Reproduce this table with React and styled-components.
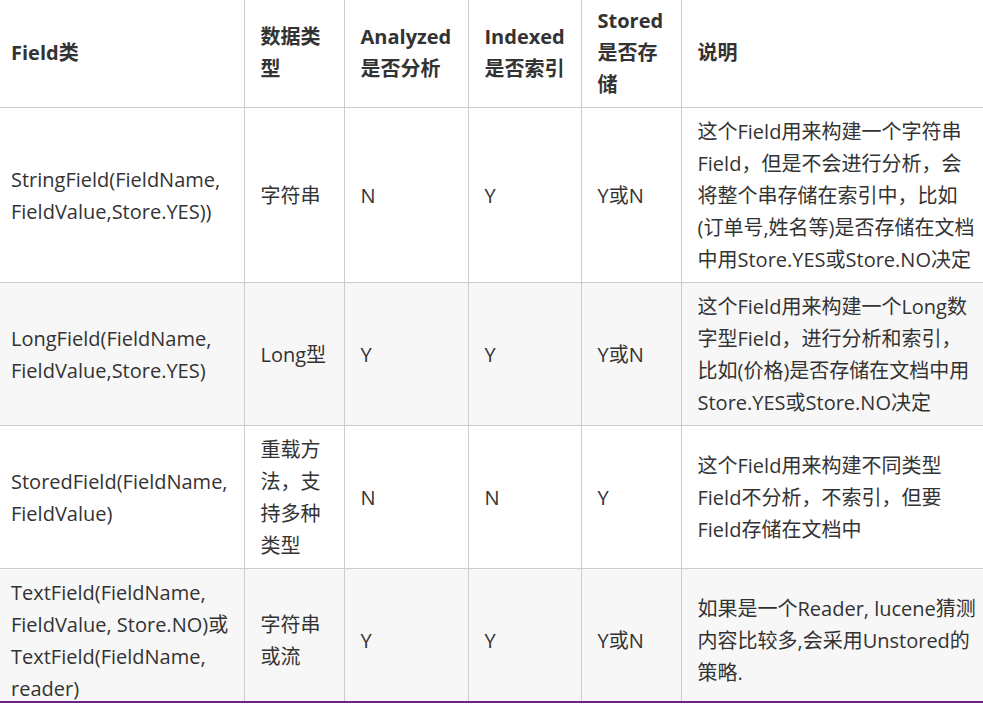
import styled, { createGlobalStyle } from "styled-components";

const GlobalStyle = createGlobalStyle`
  html, body {
    margin: 0;
    padding: 0;
    background: #fff;
  }
  body {
    font-family: "Open Sans", "Noto Sans CJK SC", sans-serif;
    color: #333;
  }
`;

const Frame = styled.div`
  width: 983px;
  height: 701px;
  overflow: hidden;
  border-bottom: 2px solid #6c2386;
`;

const Table = styled.table`
  border-collapse: collapse;
  table-layout: fixed;
  width: 995px;
  font-size: 20px;
  line-height: 32px;
`;

const HeadCell = styled.th`
  text-align: left;
  vertical-align: middle;
  font-weight: 700;
  padding: 5px 16px 6px;
  border-left: 1px solid #ccc;
  border-bottom: 1px solid #ccc;

  &:first-child {
    border-left: none;
    padding-left: 11px;
    padding-right: 10px;
  }
`;

const Row = styled.tr`
  background: ${(p) => (p.$striped ? "#f7f7f7" : "#fff")};
`;

const Cell = styled.td`
  vertical-align: middle;
  padding: 8px 16px 6px;
  border-left: 1px solid #ccc;
  border-bottom: 1px solid #ccc;

  &:first-child {
    border-left: none;
    padding-left: 11px;
    padding-right: 10px;
  }
`;

const columns = [
  { label: "Field类", width: 244 },
  { label: "数据类型", width: 100 },
  { label: "Analyzed 是否分析", width: 124 },
  { label: "Indexed 是否索引", width: 113 },
  { label: "Stored 是否存储", width: 100 },
  { label: "说明", width: 314 },
];

const rows = [
  [
    "StringField(FieldName, FieldValue,Store.YES))",
    "字符串",
    "N",
    "Y",
    "Y或N",
    "这个Field用来构建一个字符串Field，但是不会进行分析，会将整个串存储在索引中，比如(订单号,姓名等)是否存储在文档中用Store.YES或Store.NO决定",
  ],
  [
    "LongField(FieldName, FieldValue,Store.YES)",
    "Long型",
    "Y",
    "Y",
    "Y或N",
    "这个Field用来构建一个Long数字型Field，进行分析和索引，比如(价格)是否存储在文档中用Store.YES或Store.NO决定",
  ],
  [
    "StoredField(FieldName, FieldValue)",
    "重载方法，支持多种类型",
    "N",
    "N",
    "Y",
    "这个Field用来构建不同类型Field不分析，不索引，但要Field存储在文档中",
  ],
  [
    "TextField(FieldName, FieldValue, Store.NO)或 TextField(FieldName, reader)",
    "字符串或流",
    "Y",
    "Y",
    "Y或N",
    "如果是一个Reader, lucene猜测内容比较多,会采用Unstored的策略.",
  ],
];

const App = () => {
  return (
    <Frame>
      <GlobalStyle />
      <Table>
        <colgroup>
          {columns.map((c) => (
            <col key={c.label} style={{ width: c.width }} />
          ))}
        </colgroup>
        <thead>
          <tr>
            {columns.map((c) => (
              <HeadCell key={c.label}>{c.label}</HeadCell>
            ))}
          </tr>
        </thead>
        <tbody>
          {rows.map((r, i) => (
            <Row key={i} $striped={i % 2 === 1}>
              {r.map((v, j) => (
                <Cell key={j}>{v}</Cell>
              ))}
            </Row>
          ))}
        </tbody>
      </Table>
    </Frame>
  );
};

export default App;
